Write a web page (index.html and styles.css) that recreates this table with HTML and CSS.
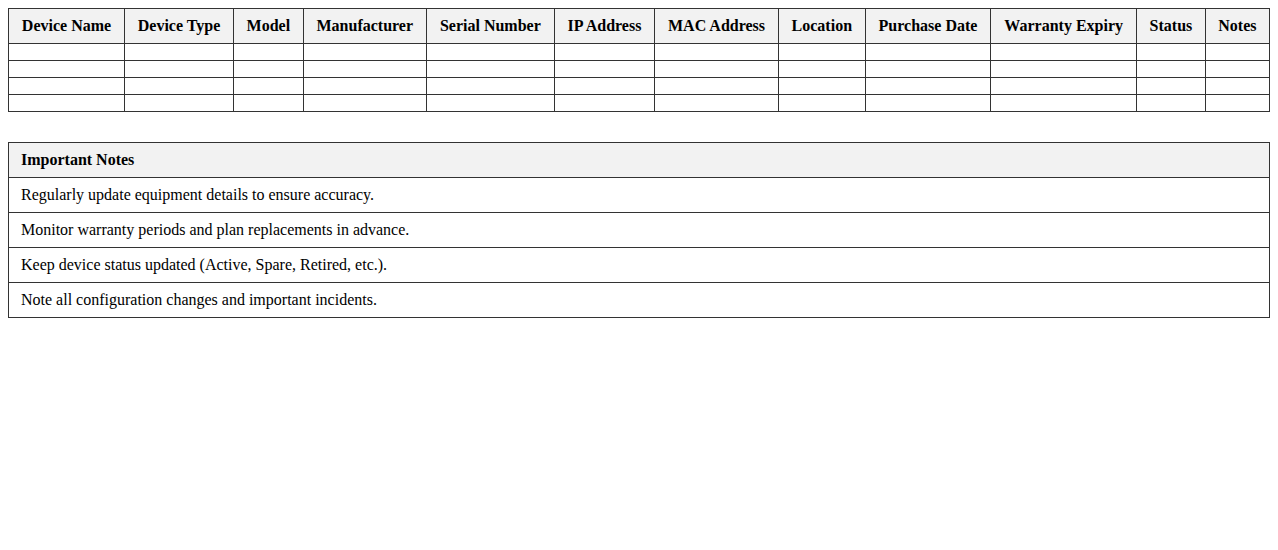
FILE: index.html
```html
<!DOCTYPE html>
<html>
<head>
<meta charset="utf-8">
<link rel="stylesheet" href="styles.css">
</head>
<body>
<table class="grid">
  <thead>
    <tr>
      <th>Device Name</th><th>Device Type</th><th>Model</th><th>Manufacturer</th><th>Serial Number</th><th>IP Address</th><th>MAC Address</th><th>Location</th><th>Purchase Date</th><th>Warranty Expiry</th><th>Status</th><th>Notes</th>
    </tr>
  </thead>
  <tbody>
    <tr><td></td><td></td><td></td><td></td><td></td><td></td><td></td><td></td><td></td><td></td><td></td><td></td></tr>
    <tr><td></td><td></td><td></td><td></td><td></td><td></td><td></td><td></td><td></td><td></td><td></td><td></td></tr>
    <tr><td></td><td></td><td></td><td></td><td></td><td></td><td></td><td></td><td></td><td></td><td></td><td></td></tr>
    <tr><td></td><td></td><td></td><td></td><td></td><td></td><td></td><td></td><td></td><td></td><td></td><td></td></tr>
  </tbody>
</table>
<table class="grid notes">
  <thead><tr><th>Important Notes</th></tr></thead>
  <tbody>
    <tr><td>Regularly update equipment details to ensure accuracy.</td></tr>
    <tr><td>Monitor warranty periods and plan replacements in advance.</td></tr>
    <tr><td>Keep device status updated (Active, Spare, Retired, etc.).</td></tr>
    <tr><td>Note all configuration changes and important incidents.</td></tr>
  </tbody>
</table>
</body>
</html>
```
FILE: styles.css
```css
body {
  margin: 8px;
  font-family: "Liberation Serif", "Times New Roman", serif;
  font-size: 16px;
  color: #000;
}
.grid {
  width: 100%;
  border-collapse: collapse;
}
.grid th, .grid td {
  border: 1px solid #333;
  padding: 8px 12px;
}
.grid th {
  background: #f2f2f2;
  font-weight: bold;
}
.notes {
  margin-top: 30px;
}
.notes th, .notes td {
  text-align: left;
}
```
